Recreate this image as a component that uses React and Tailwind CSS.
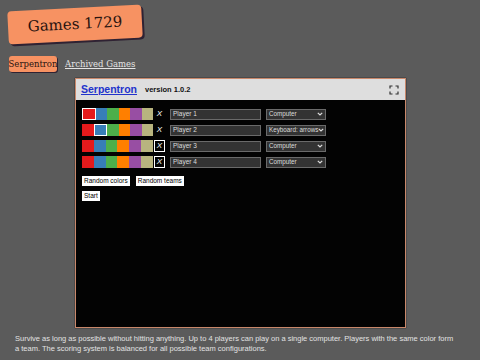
const swatches = ['#e41a1c', '#377eb8', '#4daf4a', '#ff7f00', '#984ea3', '#b8b47f']

const players = [
  { name: 'Player 1', control: 'Computer', color: 0, boxed: false },
  { name: 'Player 2', control: 'Keyboard: arrows', color: 1, boxed: false },
  { name: 'Player 3', control: 'Computer', color: -1, boxed: true },
  { name: 'Player 4', control: 'Computer', color: -1, boxed: true },
]

function FullscreenIcon() {
  return (
    <svg width="10" height="10" viewBox="0 0 10 10" fill="none" stroke="#333" strokeWidth="1.2">
      <path d="M1 3.5V1h2.5M6.5 1H9v2.5M9 6.5V9H6.5M3.5 9H1V6.5" />
    </svg>
  )
}

function PlayerRow({ p }) {
  return (
    <div className="flex h-[12px] items-center">
      <div className="flex h-full w-[71px]">
        {swatches.map((c, i) => (
          <div
            key={c}
            className={`h-full flex-1 ${i === p.color ? 'border border-white' : ''}`}
            style={{ backgroundColor: c }}
          />
        ))}
      </div>
      <div
        className={`ml-[1px] flex h-[12px] w-[11px] items-center justify-center text-[8px] italic text-white ${p.boxed ? 'border border-white' : ''}`}
      >
        X
      </div>
      <div className="ml-[5px] flex h-[11px] w-[91px] items-center border border-[#6a6a6a] bg-[#333] pl-[2px] text-[6.5px] text-[#ddd]">
        {p.name}
      </div>
      <div className="ml-[5px] flex h-[11px] w-[60px] items-center justify-between overflow-hidden whitespace-nowrap border border-[#6a6a6a] bg-[#333] pl-[2px] pr-[2px] text-[6.3px] text-[#ddd]">
        <span>{p.control}</span>
        <svg className="shrink-0" width="6" height="4" viewBox="0 0 6 4" fill="none" stroke="#ddd" strokeWidth="1.2">
          <path d="M0.8 0.8L3 3L5.2 0.8" />
        </svg>
      </div>
    </div>
  )
}

export default function App() {
  return (
    <div className="min-h-screen w-[480px] bg-[#5b5b5b] font-['Liberation_Sans',Arial,sans-serif]">
      <div className="pl-[8px] pt-[8px]">
        <div className="flex h-[33px] w-[134px] -rotate-3 items-center justify-center rounded-[4px] bg-[#f79262] shadow-[2px_2px_0_#2f2233] font-['DejaVu_Serif',serif] text-[15px] text-[#2a1410]">
          Games 1729
        </div>
      </div>
      <div className="mt-[15px] flex items-center pl-[9px] font-['DejaVu_Serif',serif]">
        <div className="flex h-[16px] w-[48px] items-center justify-center rounded-[3px] bg-[#f79262] shadow-[1px_1px_0_#2f2233] text-[8.5px] text-[#2a1410]">
          Serpentron
        </div>
        <span className="ml-[8px] text-[8.5px] text-[#e4e4e4] underline">Archived Games</span>
      </div>
      <div className="ml-[75px] mt-[6px] w-[331px] border border-[#c9876a] shadow-[0_0_1px_#000]">
        <div className="flex h-[21px] items-center bg-[#dedede] pl-[5px] pr-[6px]">
          <span className="text-[10.5px] font-bold text-[#2233cc] underline">Serpentron</span>
          <span className="ml-[8px] text-[7.5px] font-bold text-[#111]">version 1.0.2</span>
          <span className="ml-auto flex">
            <FullscreenIcon />
          </span>
        </div>
        <div className="h-[227px] bg-[#030303] pl-[6px] pt-[8px]">
          <div className="flex flex-col gap-[4px]">
            {players.map((p) => (
              <PlayerRow key={p.name} p={p} />
            ))}
          </div>
          <div className="mt-[8px] flex gap-[6px]">
            <div className="flex h-[10px] items-center bg-white px-[2px] text-[6.5px] text-black">Random colors</div>
            <div className="flex h-[10px] items-center bg-white px-[2px] text-[6.5px] text-black">Random teams</div>
          </div>
          <div className="mt-[5px] flex">
            <div className="flex h-[10px] items-center bg-white px-[2px] text-[6.5px] text-black">Start</div>
          </div>
        </div>
      </div>
      <p className="pl-[15px] pr-[24px] pt-[6px] text-[7.5px] leading-[9.5px] text-[#e2e2e2]">
        Survive as long as possible without hitting anything. Up to 4 players can play on a single computer. Players with the same color form a team. The scoring system is balanced for all possible team configurations.
      </p>
    </div>
  )
}
